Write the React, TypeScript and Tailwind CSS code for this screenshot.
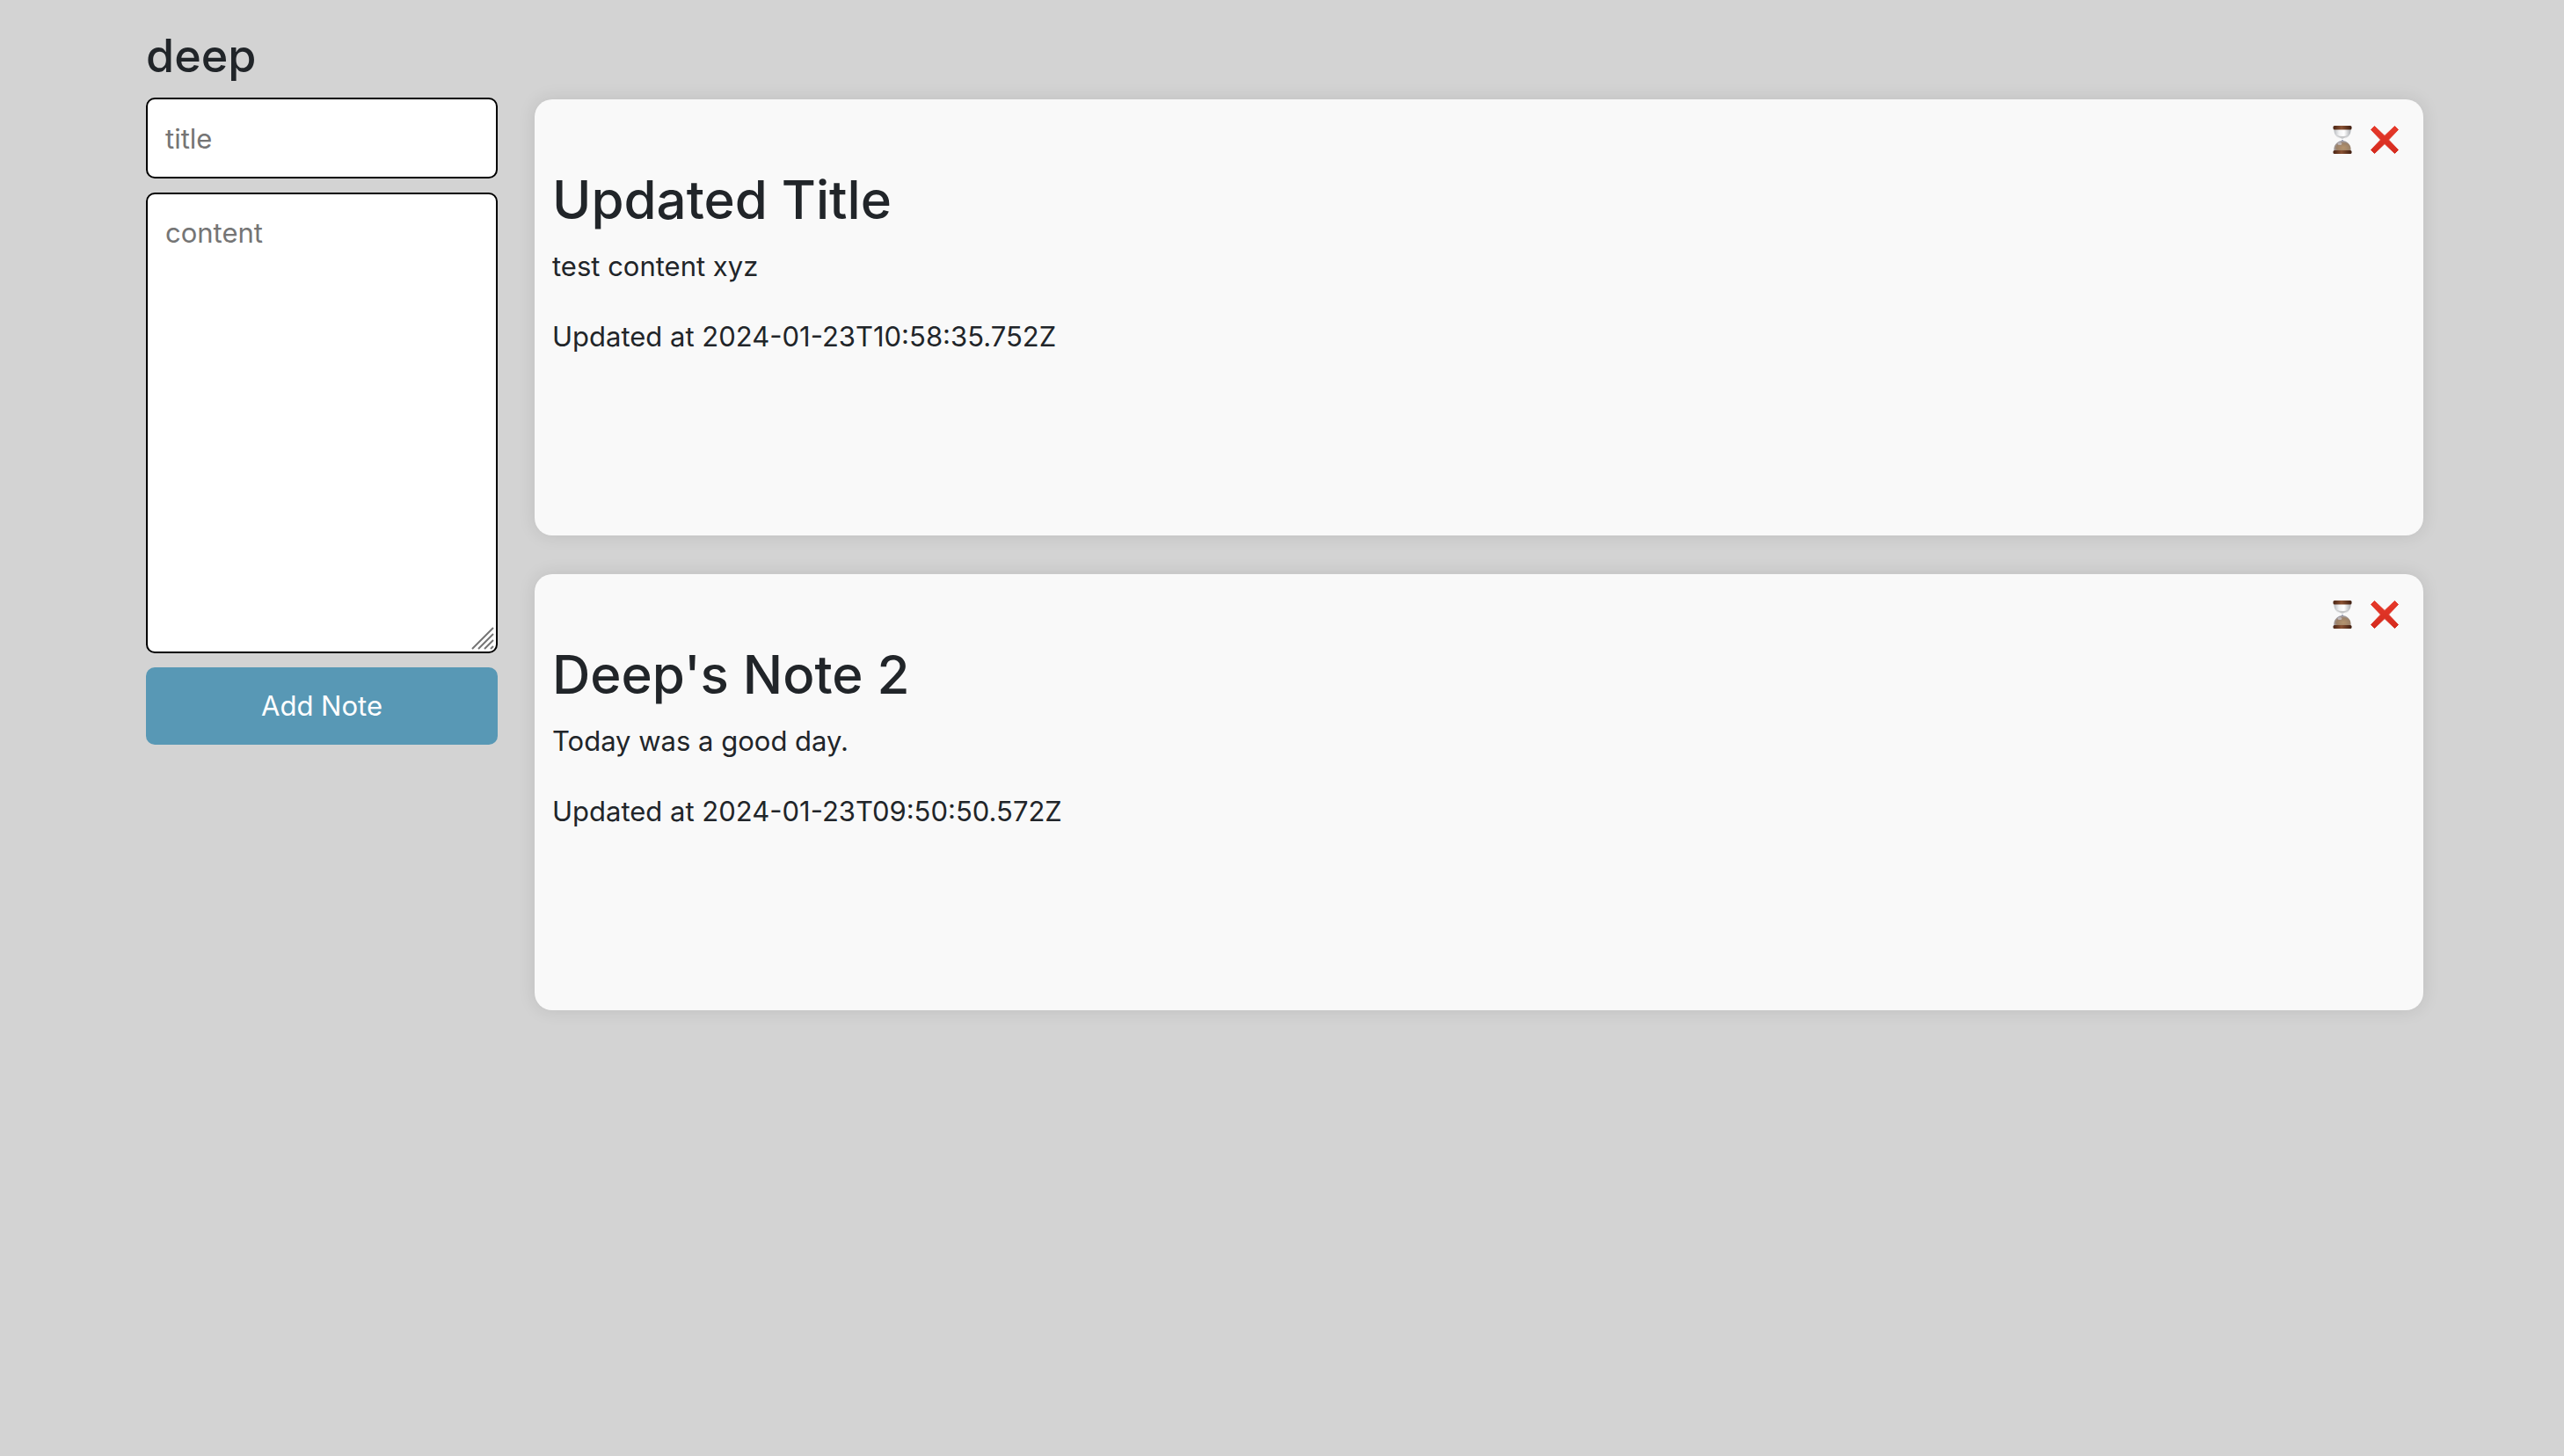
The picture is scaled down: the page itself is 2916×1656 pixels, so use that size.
type Note = { title: string; content: string; updatedAt: string };

const notes: Note[] = [
  { title: "Updated Title", content: "test content xyz", updatedAt: "2024-01-23T10:58:35.752Z" },
  { title: "Deep's Note 2", content: "Today was a good day.", updatedAt: "2024-01-23T09:50:50.572Z" },
];

function Hourglass() {
  return (
    <svg width="22" height="32" viewBox="0 0 22 32" aria-hidden="true">
      <defs>
        <linearGradient id="wood" x1="0" x2="1" y1="0" y2="0">
          <stop offset="0" stopColor="#4a2413" />
          <stop offset="0.45" stopColor="#8a5233" />
          <stop offset="1" stopColor="#3f1e10" />
        </linearGradient>
        <linearGradient id="glass" x1="0" x2="1" y1="0" y2="0">
          <stop offset="0" stopColor="#b9bcc0" />
          <stop offset="0.3" stopColor="#f1f2f3" />
          <stop offset="0.6" stopColor="#ffffff" />
          <stop offset="1" stopColor="#a9acb0" />
        </linearGradient>
        <radialGradient id="sand" cx="0.55" cy="0.7" r="0.65">
          <stop offset="0" stopColor="#b5946e" />
          <stop offset="0.6" stopColor="#9d8268" />
          <stop offset="1" stopColor="#a3a9bd" />
        </radialGradient>
      </defs>
      <path d="M1.500 4C1 9 4 14 10 15.500V18H12V15.500C18 14 21 9 20.500 4Z" fill="url(#glass)" />
      <path d="M4 10.500Q11 13.500 18 10.500Q15 14 11 15Q7 14 4 10.500Z" fill="#c6c7c8" />
      <path d="M10 16H12V17C18 18 21.500 23 20.500 29H1.500C0.500 23 4 18 10 17Z" fill="url(#sand)" />
      <ellipse cx="8" cy="20.500" rx="2.500" ry="1.500" fill="#d5daea" opacity="0.6" />
      <rect x="0.500" y="0" width="21" height="4.500" rx="1.500" fill="url(#wood)" />
      <rect x="0.500" y="28" width="21" height="4" rx="1.500" fill="url(#wood)" />
    </svg>
  );
}

function Cross() {
  return (
    <svg width="32" height="32" viewBox="0 0 32 32" aria-hidden="true">
      <defs>
        <linearGradient id="red" x1="0" x2="0" y1="0" y2="1">
          <stop offset="0" stopColor="#e63a2b" />
          <stop offset="1" stopColor="#d52b1e" />
        </linearGradient>
      </defs>
      <path
        d="M4.500 0.500L16 11.500L27.500 0.500L31.500 4.500L20.500 16L31.500 27.500L27.500 31.500L16 20.500L4.500 31.500L0.500 27.500L11.500 16L0.500 4.500Z"
        fill="url(#red)"
        stroke="url(#red)"
        strokeLinejoin="round"
      />
    </svg>
  );
}

function NoteCard({ note }: { note: Note }) {
  return (
    <article className="min-h-[496px] rounded-[20px] bg-[#f9f9f9] px-5 pt-[22px] pb-5 shadow-[0_0_20px_rgba(0,0,0,0.1)]">
      <div className="flex h-12 items-center justify-end gap-[21px] pr-2">
        <button type="button" aria-label="Update note"><Hourglass /></button>
        <button type="button" aria-label="Delete note"><Cross /></button>
      </div>
      <h2 className="mt-1.5 text-[60px] leading-[76px] font-medium">{note.title}</h2>
      <p className="mt-3.5">{note.content}</p>
      <p className="mt-8">Updated at {note.updatedAt}</p>
    </article>
  );
}

export default function App() {
  return (
    <main className="min-h-screen bg-[#d3d3d3] pt-[30px] pr-40 pb-8 pl-[166px] font-['Inter',sans-serif] text-[31px] leading-[48px] text-[#212529]">
      <h1 className="mb-3.5 text-[52px] leading-[67px] font-medium">deep</h1>
      <div className="flex items-start gap-[42px]">
        <form className="flex w-[400px] shrink-0 flex-col gap-4">
          <input
            aria-label="title"
            placeholder="title"
            className="h-[92px] w-full rounded-[10px] border-2 border-black bg-white px-5 placeholder:text-[#757575]"
          />
          <div className="relative">
            <textarea
              aria-label="content"
              placeholder="content"
              className="block h-[524px] w-full resize-none rounded-[10px] border-2 border-black bg-white p-5 placeholder:text-[#757575]"
            />
            <svg width="26" height="26" viewBox="0 0 26 26" className="absolute right-1 bottom-1" aria-hidden="true">
              <path d="M1 25L25 1M8 25L25 8M15 25L25 15M22 25L25 22" stroke="#757575" strokeWidth="2" />
            </svg>
          </div>
          <button type="button" className="h-[88px] w-full rounded-[10px] bg-[#5898b5] text-white">
            Add Note
          </button>
        </form>
        <section aria-label="Notes" className="mt-0.5 flex min-w-0 flex-1 flex-col gap-11">
          {notes.map((note) => (
            <NoteCard key={note.updatedAt} note={note} />
          ))}
        </section>
      </div>
    </main>
  );
}
